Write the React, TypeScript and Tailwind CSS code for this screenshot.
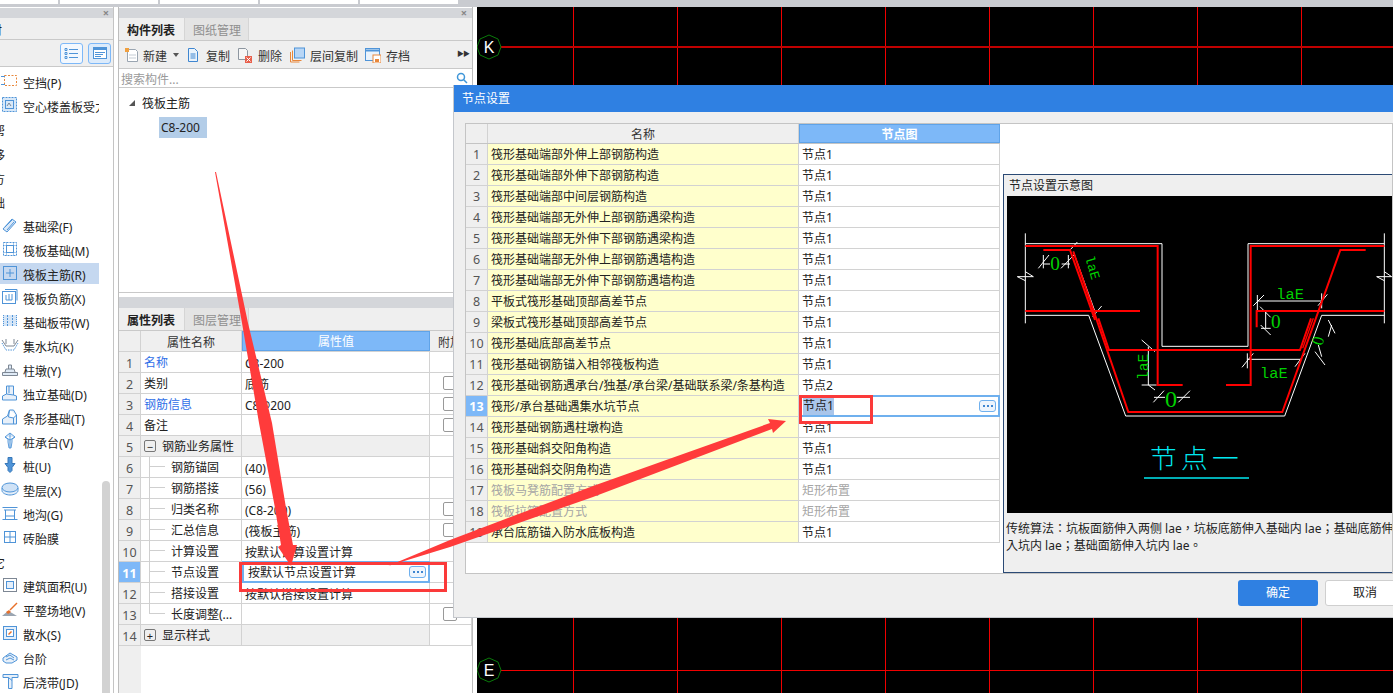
import type { ReactNode } from "react";

const font = "font-['Noto_Sans','Noto_Sans_CJK_SC',sans-serif]";

const blue = "#4f94d8";
const grey = "#7d8794";

const icons: Record<string, ReactNode> = {
  gap: (
    <>
      <rect x="3.500" y="3.500" width="12" height="10" fill="none" stroke="#e8873a" strokeDasharray="2 1.500" />
      <path d="M0 4.500h4M0 12.500h4" stroke={blue} />
    </>
  ),
  hollow: (
    <>
      <rect x="1.500" y="1.500" width="14" height="14" fill="#d8e8f8" stroke={blue} strokeDasharray="2 1" />
      <rect x="4.500" y="4.500" width="8" height="8" fill="none" stroke={blue} />
      <path d="M6 10l2-3 2 3" fill="none" stroke={grey} />
    </>
  ),
  beam: <path d="M2 13L11 3l4 3-9 10zM4 11l7-7M6 14l7-8" fill="#dbe9f8" stroke={blue} />,
  raft: (
    <>
      <rect x="2.500" y="2.500" width="13" height="13" fill="none" stroke={blue} strokeDasharray="2 1" />
      <rect x="5.500" y="5.500" width="7" height="7" fill="none" stroke={blue} />
      <path d="M2.500 5.500h13M2.500 12.500h13M5.500 2.500v13M12.500 2.500v13" stroke={blue} strokeDasharray="1 1" />
    </>
  ),
  rebar: (
    <>
      <rect x="2.500" y="2.500" width="13" height="13" fill="none" stroke={blue} />
      <path d="M9 5v8M5 9h8" stroke={blue} />
    </>
  ),
  neg: (
    <>
      <rect x="1.500" y="3.500" width="13" height="12" fill="none" stroke={blue} />
      <path d="M5 7v5h6M8 6v6M11 6v6M4 1.500h12v11" fill="none" stroke={blue} />
    </>
  ),
  strip: (
    <>
      <rect x="2" y="3" width="14" height="11" fill="#d6e6f7" />
      <path d="M6.500 3v11M11.500 3v11" stroke={blue} strokeDasharray="2 1" />
      <path d="M2.500 3v11M15.500 3v11" stroke={blue} strokeDasharray="1 1" />
    </>
  ),
  pit: (
    <>
      <path d="M1 4l4 6h8l4-6" fill="none" stroke={grey} />
      <path d="M1 7l4 7h8l4-7" fill="none" stroke={blue} strokeDasharray="1.500 1" />
      <path d="M5 3v5M13 3v5" stroke={grey} />
    </>
  ),
  pier: <path d="M1.500 15.500v-3h15v3zM4 12l1-3h8l1 3M7.500 9V5h3v4" fill="#dfeaf6" stroke={grey} />,
  footing: <path d="M1.500 16v-4l4-2V2h7v9l3 1v4zM5.500 10l7 1M8 2v7" fill="#e8f0f9" stroke={blue} />,
  stripf: <path d="M1.500 16v-5l5-3 2-6h4l3 5v9zM8.500 2l-1 7 5 1 3-3M12.500 10v6" fill="#e8f0f9" stroke={blue} />,
  cap: <path d="M9 1l5 4-3 2v3l-1 6H8L7 10V7L4 5zM9 1v15M4 5l5 3 5-3" fill="#dbe9f8" stroke={blue} strokeWidth=".9" />,
  pile: <path d="M7 1.500h4v6h3l-3 4v3l-2 2-2-2v-3l-3-4h3z" fill="#4f94d8" stroke="#3677b8" />,
  cushion: (
    <>
      <path d="M1 8v2.500C1 13 5 15 9 15s8-2 8-4.500V8" fill="#e4eef9" stroke={blue} />
      <ellipse cx="9" cy="7.500" rx="8" ry="4.500" fill="#cfe2f6" stroke={blue} />
    </>
  ),
  ditch: <path d="M1.500 3.500h15M3 6h12M4.500 6v9M13.500 6v9M1.500 15.500h15M4.500 12h9" fill="none" stroke={blue} />,
  brick: (
    <>
      <rect x="3.500" y="3.500" width="11" height="11" fill="#fff" stroke={blue} />
      <path d="M9 3.500v11M3.500 9h11" stroke={blue} />
    </>
  ),
  area: (
    <>
      <rect x="2.500" y="2.500" width="13" height="13" fill="none" stroke={grey} />
      <rect x="5.500" y="5.500" width="7" height="7" fill="#e5effa" stroke={blue} />
    </>
  ),
  ground: (
    <>
      <path d="M1 16l6-5 4 2 5 3z" fill="#9aa5b1" />
      <path d="M5 12l3-2 2 2-3 2z" fill="#e8702a" />
      <path d="M9 10l7-7" stroke="#e8702a" strokeWidth="1.500" />
    </>
  ),
  apron: (
    <>
      <rect x="2.500" y="2.500" width="13" height="13" fill="#e5effa" stroke={blue} />
      <rect x="5.500" y="5.500" width="7" height="7" fill="#fff" stroke={blue} />
      <path d="M7.500 10.500l3-3" stroke="#e8702a" strokeWidth="1.500" />
    </>
  ),
  step: <path d="M2 10l7-5 7 4v3l-5 3H5l-3-2zM5 9l4-2 4 3M5 12l4-2 4 2" fill="#e8f0f9" stroke={blue} />,
  post: <path d="M2 2.500h15v3H11v11H7.500v-11H2zM7.500 5.500l3.500 3" fill="#e8f0f9" stroke={blue} />,
};

const sideItems: { label: string; icon?: string; head?: boolean; active?: boolean }[] = [
  { label: "空挡(P)", icon: "gap" },
  { label: "空心楼盖板受力", icon: "hollow" },
  { label: "帮", head: true },
  { label: "移", head: true },
  { label: "方", head: true },
  { label: "础", head: true },
  { label: "基础梁(F)", icon: "beam" },
  { label: "筏板基础(M)", icon: "raft" },
  { label: "筏板主筋(R)", icon: "rebar", active: true },
  { label: "筏板负筋(X)", icon: "neg" },
  { label: "基础板带(W)", icon: "strip" },
  { label: "集水坑(K)", icon: "pit" },
  { label: "柱墩(Y)", icon: "pier" },
  { label: "独立基础(D)", icon: "footing" },
  { label: "条形基础(T)", icon: "stripf" },
  { label: "桩承台(V)", icon: "cap" },
  { label: "桩(U)", icon: "pile" },
  { label: "垫层(X)", icon: "cushion" },
  { label: "地沟(G)", icon: "ditch" },
  { label: "砖胎膜", icon: "brick" },
  { label: "它", head: true },
  { label: "建筑面积(U)", icon: "area" },
  { label: "平整场地(V)", icon: "ground" },
  { label: "散水(S)", icon: "apron" },
  { label: "台阶", icon: "step" },
  { label: "后浇带(JD)", icon: "post" },
];

const props: { name?: string; value?: string; link?: boolean; child?: boolean; last?: boolean; check?: boolean; group?: string }[] = [
  { name: "名称", value: "C8-200", link: true },
  { name: "类别", value: "底筋", check: true },
  { name: "钢筋信息", value: "C8@200", link: true, check: true },
  { name: "备注", check: true },
  { group: "−", name: "钢筋业务属性" },
  { name: "钢筋锚固", value: "(40)", child: true },
  { name: "钢筋搭接", value: "(56)", child: true },
  { name: "归类名称", value: "(C8-200)", child: true, check: true },
  { name: "汇总信息", value: "(筏板主筋)", child: true, check: true },
  { name: "计算设置", value: "按默认计算设置计算", child: true },
  { name: "节点设置", value: "按默认节点设置计算", child: true },
  { name: "搭接设置", value: "按默认搭接设置计算", child: true },
  { name: "长度调整(...", child: true, last: true, check: true },
  { group: "+", name: "显示样式" },
];

const nodes = [
  "筏形基础端部外伸上部钢筋构造",
  "筏形基础端部外伸下部钢筋构造",
  "筏形基础端部中间层钢筋构造",
  "筏形基础端部无外伸上部钢筋遇梁构造",
  "筏形基础端部无外伸下部钢筋遇梁构造",
  "筏形基础端部无外伸上部钢筋遇墙构造",
  "筏形基础端部无外伸下部钢筋遇墙构造",
  "平板式筏形基础顶部高差节点",
  "梁板式筏形基础顶部高差节点",
  "筏形基础底部高差节点",
  "筏形基础钢筋锚入相邻筏板构造",
  "筏形基础钢筋遇承台/独基/承台梁/基础联系梁/条基构造",
  "筏形/承台基础遇集水坑节点",
  "筏形基础钢筋遇柱墩构造",
  "筏形基础斜交阳角构造",
  "筏形基础斜交阴角构造",
  "筏板马凳筋配置方式",
  "筏板拉筋配置方式",
  "承台底筋锚入防水底板构造",
];

function DotsButton() {
  return (
    <span className="flex h-[12px] w-[17px] items-center justify-center gap-[2px] rounded-[3px] border border-[#6fb0ee] bg-[#eef5fd]">
      <i className="h-[2px] w-[2px] bg-[#3f86d0]" />
      <i className="h-[2px] w-[2px] bg-[#3f86d0]" />
      <i className="h-[2px] w-[2px] bg-[#3f86d0]" />
    </span>
  );
}

function Tabs({ first, second }: { first: string; second: string }) {
  return (
    <div className="flex h-[23px] items-stretch border-b border-[#c9c9c9] bg-[#efefef] text-[12px] leading-[26px]">
      <div className="w-[65px] pl-[8px] font-bold text-[#222]">{first}</div>
      <div className="w-[65px] border-x border-[#d5d5d5] bg-[#e4e4e4] pl-[8px] text-[#8f8f8f]">{second}</div>
    </div>
  );
}

function ToolItem({ label, className, children }: { label: string; className: string; children: ReactNode }) {
  return (
    <div className={`flex items-center ${className}`}>
      <svg width="16" height="16" viewBox="0 0 16 16">
        {children}
      </svg>
      <span className="pt-[5px]">{label}</span>
    </div>
  );
}

function PropertyRow({ index, row }: { index: number; row: (typeof props)[number] }) {
  const selected = index === 11;
  return (
    <div className="flex h-[21px] border-b border-[#d2d2d2] text-[12px] leading-[24px] text-[#222]">
      <div
        className={`w-[22px] shrink-0 border-r border-[#d2d2d2] text-center text-[12.5px] ${
          selected ? "bg-[#7db8f8] font-bold text-white" : "bg-[#efefef] text-[#555]"
        }`}
      >
        {index}
      </div>
      <div
        className={`flex w-[101px] shrink-0 items-center border-r border-[#d2d2d2] whitespace-nowrap ${
          row.group ? "bg-[#efefef]" : ""
        }`}
      >
        {row.group ? (
          <>
            <span className="ml-[3px] mr-[6px] flex h-[12px] w-[12px] items-center justify-center rounded-[2px] border border-[#777] text-[11px] leading-none">
              {row.group}
            </span>
            <span className="pt-[2px]">{row.name}</span>
          </>
        ) : row.child ? (
          <>
            <span className={`ml-[8px] mr-[6px] w-[16px] self-start border-l border-[#cfcfcf] ${row.last ? "h-[10px]" : "h-[21px]"}`}>
              <span className="block h-[10px] border-b border-[#cfcfcf]" />
            </span>
            <span className="pt-[2px]">{row.name}</span>
          </>
        ) : (
          <span className={`ml-[3px] pt-[2px] ${row.link ? "text-[#2f6fe8]" : ""}`}>{row.name}</span>
        )}
      </div>
      {selected ? (
        <div className="-mt-px flex h-[22px] w-[188px] shrink-0 items-center justify-between border-2 border-[#6fb0ee] bg-white pl-[4px] pr-[2px]">
          <span className="pt-[1px]">{row.value}</span>
          <DotsButton />
        </div>
      ) : (
        <div className={`w-[188px] shrink-0 border-r border-[#d2d2d2] pl-[3px] ${row.group ? "bg-[#efefef]" : ""}`}>
          {row.value}
        </div>
      )}
      <div className="flex flex-1 items-center border-r border-[#d2d2d2] pl-[13px]">
        {row.check && <span className="h-[14px] w-[14px] rounded-[2px] border border-[#999] bg-white" />}
      </div>
    </div>
  );
}

function NodeRow({ index, name }: { index: number; name: string }) {
  const selected = index === 13;
  const muted = index === 17 || index === 18;
  const value = index === 12 ? "节点2" : muted ? "矩形布置" : "节点1";
  return (
    <div className="flex h-[21px] border-b border-[#d2d2d2] text-[12px] leading-[22px] text-[#222]">
      <div
        className={`w-[22px] shrink-0 border-r border-[#d2d2d2] text-center text-[12.5px] ${
          selected ? "bg-[#7db8f8] font-bold text-white" : "bg-[#efefef] text-[#555]"
        }`}
      >
        {index}
      </div>
      <div className={`w-[311px] shrink-0 border-r border-[#d2d2d2] bg-[#ffffcc] pl-[3px] ${muted ? "text-[#a5a5a5]" : ""}`}>
        {name}
      </div>
      {selected ? (
        <div className="-mt-px flex h-[22px] flex-1 items-center justify-between border-2 border-[#6fb0ee] bg-white pl-[2px] pr-[2px]">
          <span className="bg-[#a9c5ea] leading-[18px]">{value}</span>
          <DotsButton />
        </div>
      ) : (
        <div className={`flex-1 border-r border-[#d2d2d2] pl-[3px] ${muted ? "text-[#a5a5a5]" : ""}`}>{value}</div>
      )}
    </div>
  );
}

function Diagram() {
  return (
    <svg width="386" height="317" viewBox="21 78 1158 951" className="block">
      <g fill="none" stroke="#fff" strokeWidth="3">
        <path d="M76 190V460M1153 190V460" />
        <path d="M76 221H486V529H744V221H1153" />
        <path d="M76 436H266L377 738H854L965 436H1153" />
        <path d="M220 245L285 425" />
        <path d="M52 320H100L76 305M52 320L76 332M1130 320H1175L1153 305M1130 320L1153 332" />
        <path d="M130 282H150M185 282H210M115 295L147 255M183 295L222 255M130 255V295M205 255V295" />
        <path d="M445 530V645M425 510L465 545M425 645H470M445 645L465 660" />
        <path d="M462 682H495M530 682H570M460 697L492 662M535 697L570 662" />
        <path d="M772 393H965M760 407L792 375M954 407L982 373M772 375V420M965 370V415" />
        <path d="M797 425V475M780 410L812 442M782 465L812 495M783 475H812" />
        <path d="M742 568H900M726 592L760 550M742 550V595M885 590L915 550" />
        <path d="M965 560L955 525M985 500L995 465M945 545L975 585M985 450L1005 490" />
        <path d="M210 240L232 216M278 440L305 408" />
      </g>
      <g fill="none" stroke="#f00" strokeWidth="6">
        <path d="M76 228H473V645H548" />
        <path d="M1153 228H752V645H678" />
        <path d="M76 423H420" />
        <path d="M1153 423H770V472" />
        <path d="M130 240H210L285 450" />
        <path d="M1097 240H1021L847 726H385L220 245" />
        <path d="M295 445L327 540H900L933 445" />
        <path d="M908 535L940 445" strokeWidth="4" />
      </g>
      <g fill="#00d000" fontFamily="'Liberation Serif', serif">
        <text x="151" y="299" fontSize="58">0</text>
        <text x="495" y="710" fontSize="72">0</text>
        <text x="813" y="473" fontSize="58">0</text>
        <text transform="translate(967 529) rotate(-75)" fontSize="50">0</text>
      </g>
      <g fill="#00d000" fontFamily="'Liberation Mono', monospace">
        <text x="829" y="386" fontSize="46">laE</text>
        <text x="780" y="625" fontSize="46">laE</text>
        <text transform="translate(255 262) rotate(74)" fontSize="40">laE</text>
        <text transform="translate(443 630) rotate(-90)" fontSize="44">laE</text>
      </g>
      <text x="450" y="894" fill="#00e8f0" fontSize="80" letterSpacing="13" fontFamily="'Noto Sans CJK SC', sans-serif" fontWeight="300">
        节点一
      </text>
      <path d="M432 924H747" stroke="#00e8f0" strokeWidth="5" />
    </svg>
  );
}

export default function App() {
  return (
    <div className={`relative h-[693px] w-[1393px] overflow-hidden bg-white ${font}`}>
      <div className="flex h-[7px] items-start bg-[#c9cbd0]">
        {[58, 98, 98, 98, 98].map((w, i) => (
          <div key={i} className="mr-[2px] h-[4px] bg-white" style={{ width: w }} />
        ))}
      </div>
      <div className="flex h-[686px]">
        {/* left tree */}
        <aside className="relative flex w-[114px] shrink-0 flex-col border-r border-[#c4c4c4]">
          <div className="mt-px flex h-[10px] items-center justify-end bg-[#d4d6da] pr-[4px] text-[11px] font-bold text-[#888]">×</div>
          <div className="h-[23px] overflow-hidden border-b border-[#c9c9c9] bg-[#efefef] text-[12px] leading-[25px] text-[#222]">
            <span className="-ml-[10px] block">材</span>
          </div>
          <div className="flex h-[28px] items-center justify-end gap-[5px] border-b border-[#c9c9c9] bg-[#efefef] pr-[2px]">
            <span className="flex h-[21px] w-[23px] items-center justify-center rounded-[3px] border border-[#7db8f8] bg-[#f3f8fe]">
              <svg width="15" height="13" viewBox="0 0 15 13" fill="none" stroke="#4f94d8">
                <path d="M1 1.500h2v2H1zM1 5.500h2v2H1zM1 9.500h2v2H1zM5 2.500h9M5 6.500h9M5 10.500h9" />
              </svg>
            </span>
            <span className="flex h-[21px] w-[23px] items-center justify-center rounded-[3px] border border-[#7db8f8] bg-[#dcebfb]">
              <svg width="16" height="14" viewBox="0 0 16 14" fill="none" stroke="#4f94d8">
                <rect x="1.500" y="1.500" width="13" height="11" fill="#fff" />
                <path d="M1.500 2.500h13M1.500 3.500h13" />
                <path d="M3 6.500h10M3 8.500h8M3 10.500h6" />
              </svg>
            </span>
          </div>
          <div className="flex flex-col pt-[2px] text-[12px] text-[#222]">
            {sideItems.map((item) => (
              <div key={item.label} className="flex h-[24px] items-center whitespace-nowrap">
                {item.head ? (
                  <span className="-ml-[7px] pt-[6px]">{item.label}</span>
                ) : (
                  <div className={`flex h-[21px] w-[99px] items-center overflow-hidden ${item.active ? "bg-[#c5d8f0]" : ""}`}>
                    <svg width="18" height="18" viewBox="0 0 18 18" className="ml-px mr-[4px] shrink-0">
                      {icons[item.icon as string]}
                    </svg>
                    <span className="pt-[5px]">{item.label}</span>
                  </div>
                )}
              </div>
            ))}
          </div>
          <div className="absolute bottom-0 left-[102px] h-[212px] w-[8px] rounded-t-[4px] bg-[#d2d2d2]" />
        </aside>

        {/* component + property panels */}
        <main className="ml-[4px] flex w-[355px] shrink-0 flex-col border-x border-[#bdbdbd]">
          <div className="mt-px flex h-[10px] items-center justify-end bg-[#d4d6da] pr-[5px] text-[11px] font-bold text-[#888]">×</div>
          <Tabs first="构件列表" second="图纸管理" />
          <div className="flex h-[28px] items-center border-b border-[#c9c9c9] bg-[#efefef] text-[12px] text-[#333]">
            <ToolItem label="新建" className="ml-[5px] gap-[3px]">
              <path d="M3.500 2.500h8l2 2v10h-10z" fill="#fff" stroke="#9aa5b1" />
              <path d="M5 8h7M5 11h7" stroke="#c5ccd4" />
              <path d="M1 1h4v4H1z" fill="#f0a040" />
            </ToolItem>
            <span className="ml-[6px] mt-[1px] h-0 w-0 border-x-[3px] border-t-[4px] border-x-transparent border-t-[#555]" />
            <ToolItem label="复制" className="ml-[6px] gap-[5px]">
              <path d="M3.500 1.500h6l3 3v10h-9z" fill="#eaf3fc" stroke="#3f86d0" />
              <path d="M5.500 7h5M5.500 9h5M5.500 11h5" stroke="#3f86d0" />
            </ToolItem>
            <ToolItem label="删除" className="ml-[7px] gap-[5px]">
              <path d="M1.500 1.500h7l2 2v9h-9z" fill="#f6f6f6" stroke="#8d96a0" />
              <rect x="8" y="9" width="7" height="7" fill="#e8604c" />
              <path d="M9.500 10.500l4 4m0-4l-4 4" stroke="#fff" />
            </ToolItem>
            <ToolItem label="层间复制" className="ml-[7px] gap-[5px]">
              <path d="M1.500 5v10h9M3.500 3.500v10h9" fill="none" stroke="#e8873a" />
              <rect x="5.500" y="1" width="10" height="10" fill="#b8d6f6" stroke="#4f94d8" />
            </ToolItem>
            <ToolItem label="存档" className="ml-[7px] gap-[5px]">
              <rect x="0.500" y="1.500" width="14" height="12" fill="#eaf3fc" stroke="#4f94d8" />
              <path d="M0.500 3.500h14" stroke="#4f94d8" strokeWidth="2" />
              <rect x="8" y="8" width="8" height="8" fill="#fff" stroke="#e8873a" />
              <rect x="10" y="12" width="4" height="3" fill="#e8873a" />
            </ToolItem>
            <span className="ml-auto mr-[3px] text-[7px] tracking-[-1px] text-[#333]">▶▶</span>
          </div>
          <div className="flex h-[19px] items-center justify-between border-b border-[#c9c9c9] bg-white pl-[2px] pr-[4px] text-[12px] text-[#9a9a9a]">
            <span className="pt-[3px]">搜索构件...</span>
            <svg width="12" height="12" viewBox="0 0 12 12" fill="none" stroke="#3f96d8" strokeWidth="1.500">
              <circle cx="5" cy="5" r="3.500" />
              <path d="M7.500 7.500L11 11" />
            </svg>
          </div>
          <div className="h-[205px] border-b border-[#c9c9c9] bg-white text-[12px] text-[#222]">
            <div className="flex h-[29px] items-center pl-[10px] pt-[1px]">
              <span className="mr-[7px] h-0 w-0 border-b-[6px] border-l-[6px] border-b-[#555] border-l-transparent" />
              <span className="pt-[2px]">筏板主筋</span>
            </div>
            <div className="ml-[40px] w-[48px] bg-[#b3cde8] pl-[2px] leading-[21px]">C8-200</div>
          </div>
          <div className="h-[4px] bg-white" />
          <div className="h-[11px] bg-[#d4d6da]" />
          <Tabs first="属性列表" second="图层管理" />
          <div className="flex h-[21px] border-b border-[#d2d2d2] bg-[#efefef] text-[12px] leading-[23px] text-[#333]">
            <div className="w-[22px] shrink-0 border-r border-[#d2d2d2]" />
            <div className="w-[101px] shrink-0 border-r border-[#d2d2d2] text-center">属性名称</div>
            <div className="w-[188px] shrink-0 border border-[#5fa3e8] bg-[#7db8f8] text-center leading-[20px] text-white">属性值</div>
            <div className="flex-1 pl-[8px]">附加</div>
          </div>
          {props.map((row, i) => (
            <PropertyRow key={i} index={i + 1} row={row} />
          ))}
          <div className="flex-1">
            <div className="h-full w-[22px] bg-[#efefef]" />
          </div>
        </main>

        {/* drawing canvas */}
        <section className="ml-[4px] flex-1 bg-black">
          <svg width="916" height="686" viewBox="477 7 916 686" className="block" shapeRendering="crispEdges">
            <g stroke="#f00000" strokeWidth="1">
              {[573, 677, 781, 885, 989, 1093, 1197, 1301].map((x) => (
                <path key={x} d={`M${x + 0.5} 7V693`} />
              ))}
            </g>
            <path d="M477 47H1393" stroke="#c00000" strokeWidth="2" />
            <path d="M477 670.500H1393" stroke="#f00000" strokeWidth="1" />
            <g fill="#000" stroke="#0a7a0a" shapeRendering="auto">
              <path d="M489 35l9 4 3 8-3 8-9 4-9-4-3-8 3-8z" />
              <path d="M489 658l9 4 3 8-3 8-9 4-9-4-3-8 3-8z" />
            </g>
            <g fill="#fff" fontSize="16" fontFamily="'Liberation Sans', sans-serif" textAnchor="middle" shapeRendering="auto">
              <text x="489" y="53">K</text>
              <text x="489" y="676">E</text>
            </g>
          </svg>
        </section>
      </div>

      {/* node settings dialog */}
      <div className="absolute left-[453px] top-[85px] flex h-[533px] w-[940px] flex-col border-b border-l border-[#c4c7cc] bg-[#efefef]">
        <div className="h-[27px] bg-[#2f80e2] pl-[8px] text-[12px] leading-[27px] text-white">节点设置</div>
        <div className="ml-[11px] mt-[11px] flex h-[451px] border border-[#c4c4c4] bg-white">
          <div className="w-[534px] shrink-0">
            <div className="flex h-[20px] border-b border-[#c4c4c4] bg-[#efefef] text-[12px] leading-[21px] text-[#333]">
              <div className="w-[22px] shrink-0 border-r border-[#d2d2d2]" />
              <div className="w-[311px] shrink-0 border-r border-[#d2d2d2] text-center">名称</div>
              <div className="flex-1 border border-[#5fa3e8] bg-[#7db8f8] text-center font-bold leading-[19px] text-white">节点图</div>
            </div>
            {nodes.map((name, i) => (
              <NodeRow key={i} index={i + 1} name={name} />
            ))}
          </div>
          <div className="flex-1 overflow-hidden pl-[3px] pt-[50px]">
            <div className="h-[399px] border-b border-l border-t border-[#2b4a75] bg-[#efefef] text-[12px] text-[#222]">
              <div className="h-[21px] pl-[5px] leading-[22px]">节点设置示意图</div>
              <div className="ml-[3px] bg-black">
                <Diagram />
              </div>
              <div className="mt-[7px] whitespace-nowrap pl-[2px] font-['Noto_Sans','Noto_Sans_CJK_TC',sans-serif] leading-[17px]">
                <div>传统算法：坑板面筋伸入两侧 lae，坑板底筋伸入基础内 lae；基础底筋伸</div>
                <div>入坑内 lae；基础面筋伸入坑内 lae。</div>
              </div>
            </div>
          </div>
        </div>
        <div className="flex flex-1 justify-end gap-[7px] pr-0 pt-[6px] text-[12px]">
          <button className="h-[26px] w-[80px] rounded-[3px] bg-[#2f80e2] text-white">确定</button>
          <button className="-mr-[12px] h-[26px] w-[80px] rounded-[3px] border border-[#cfcfcf] bg-white text-[#222]">取消</button>
        </div>
      </div>

      {/* annotations drawn on top of the screenshot */}
      <div className="absolute left-[239px] top-[562px] h-[30px] w-[208px] border-[3px] border-[#fb3a3a]" />
      <div className="absolute left-[799px] top-[395px] h-[29px] w-[74px] border-[3px] border-[#fb3a3a]" />
      <svg width="1393" height="693" className="pointer-events-none absolute left-0 top-0">
        <polygon
          fill="#ff3b3b"
          points="215,172 242,323 259,423 275,508 281,545 278,547 291,566 297,545 293,545 286,508 272,423 248,323 216,172"
        />
        <polygon
          fill="#ff3b3b"
          points="388,566 450,540 593,486 770,423 768,419 786,421 773,433 772,429 593,497 450,547 388,566"
        />
      </svg>
    </div>
  );
}
